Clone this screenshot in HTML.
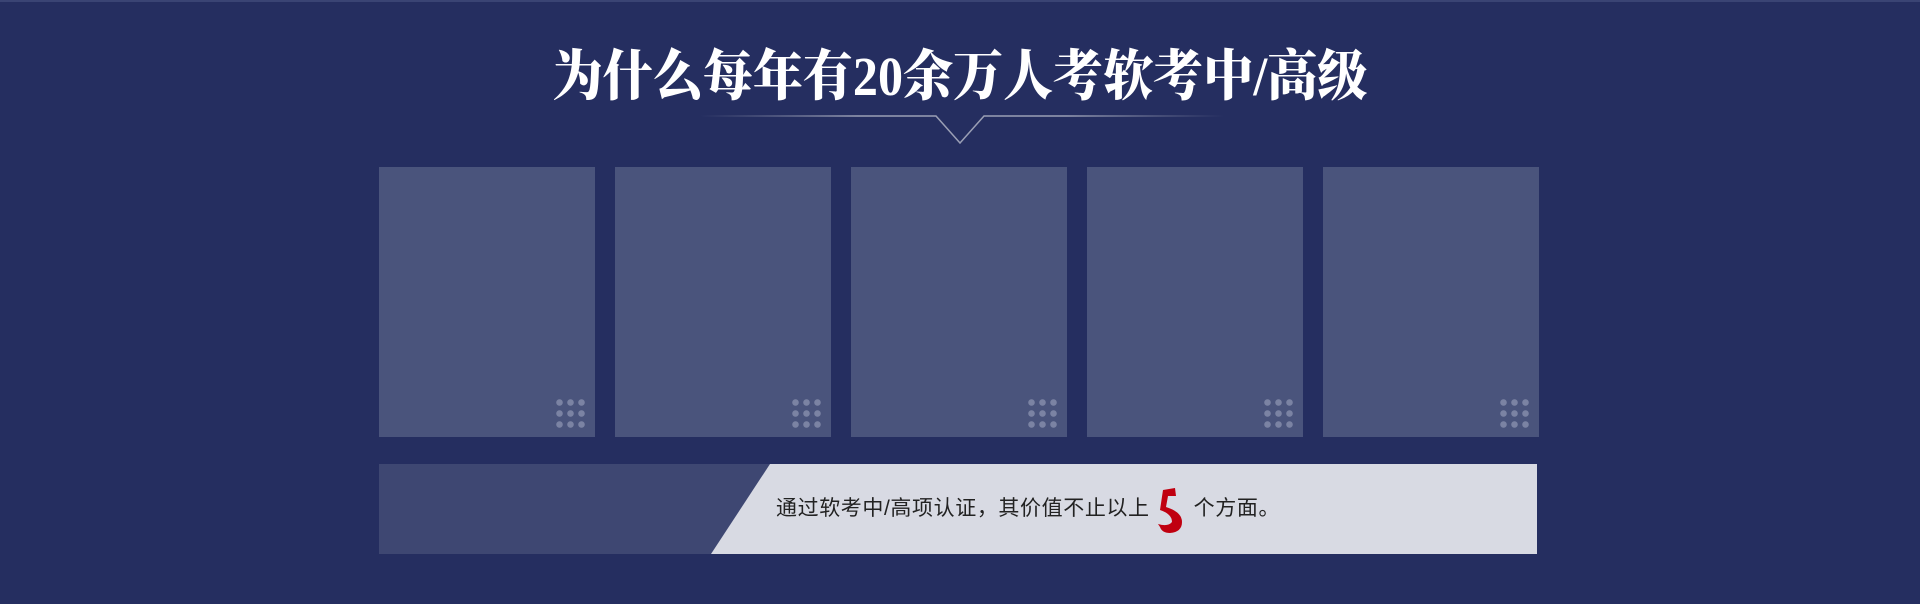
<!DOCTYPE html>
<html><head><meta charset="utf-8"><style>
*{margin:0;padding:0;box-sizing:border-box}
body{width:1920px;height:604px;background:#252e60;position:relative;overflow:hidden;font-family:"Liberation Sans","Noto Sans CJK SC",sans-serif}
.top{position:absolute;left:0;top:0;width:1920px;height:2px;background:#3a4474}
h1{position:absolute;left:0;width:1920px;top:47px;text-align:center;color:#fff;font-family:"Liberation Serif","Noto Serif CJK SC",serif;font-weight:900;font-size:55px;line-height:60px;letter-spacing:0px;transform:scaleX(0.91)}
.card{position:absolute;top:167px;width:216px;height:270px;background:#4a547c}
.dots{position:absolute;right:8px;bottom:7px;width:33px;height:33px;background:radial-gradient(circle,#7b83a3 3px,transparent 3.5px) 0 0/11px 11px}
.bar{position:absolute;left:379px;top:464px;width:1158px;height:90px;background:#3e4772}
.txt{position:absolute;left:776px;top:496px;font-size:21px;letter-spacing:0.6px;color:#222;line-height:26px;white-space:nowrap}
</style></head><body>
<div class="top"></div>
<h1>为什么每年有20余万人考软考中/高级</h1>
<svg style="position:absolute;left:0;top:0" width="1920" height="200">
<defs><linearGradient id="g" x1="0" x2="1"><stop offset="0" stop-color="#8a8fa8" stop-opacity="0"/><stop offset=".3" stop-color="#9a9fb5"/><stop offset=".7" stop-color="#9a9fb5"/><stop offset="1" stop-color="#8a8fa8" stop-opacity="0"/></linearGradient></defs>
<path d="M700 116 H936 L960 143 L984 116 H1224" stroke="url(#g)" stroke-width="1.5" fill="none"/>
</svg>
<div class="card" style="left:379px"><div class="dots"></div></div>
<div class="card" style="left:615px"><div class="dots"></div></div>
<div class="card" style="left:851px"><div class="dots"></div></div>
<div class="card" style="left:1087px"><div class="dots"></div></div>
<div class="card" style="left:1323px"><div class="dots"></div></div>
<div class="bar"></div>
<svg style="position:absolute;left:0;top:0" width="1920" height="604"><polygon points="770,464 1537,464 1537,554 711,554" fill="#d8dae3"/>
<path d="M1163 490 L1175 488 L1176 496 L1168 496 L1166 507 Q1182 512 1182 522 Q1182 532 1170 533 Q1162 533 1160 527 L1158 524 Q1168 527 1172 522 Q1172 514 1160 510 Z" fill="#c00010"/></svg>
<div class="txt">通过软考中/高项认证，其价值不止以上<span style="display:inline-block;width:44px"></span>个方面。</div>
</body></html>
